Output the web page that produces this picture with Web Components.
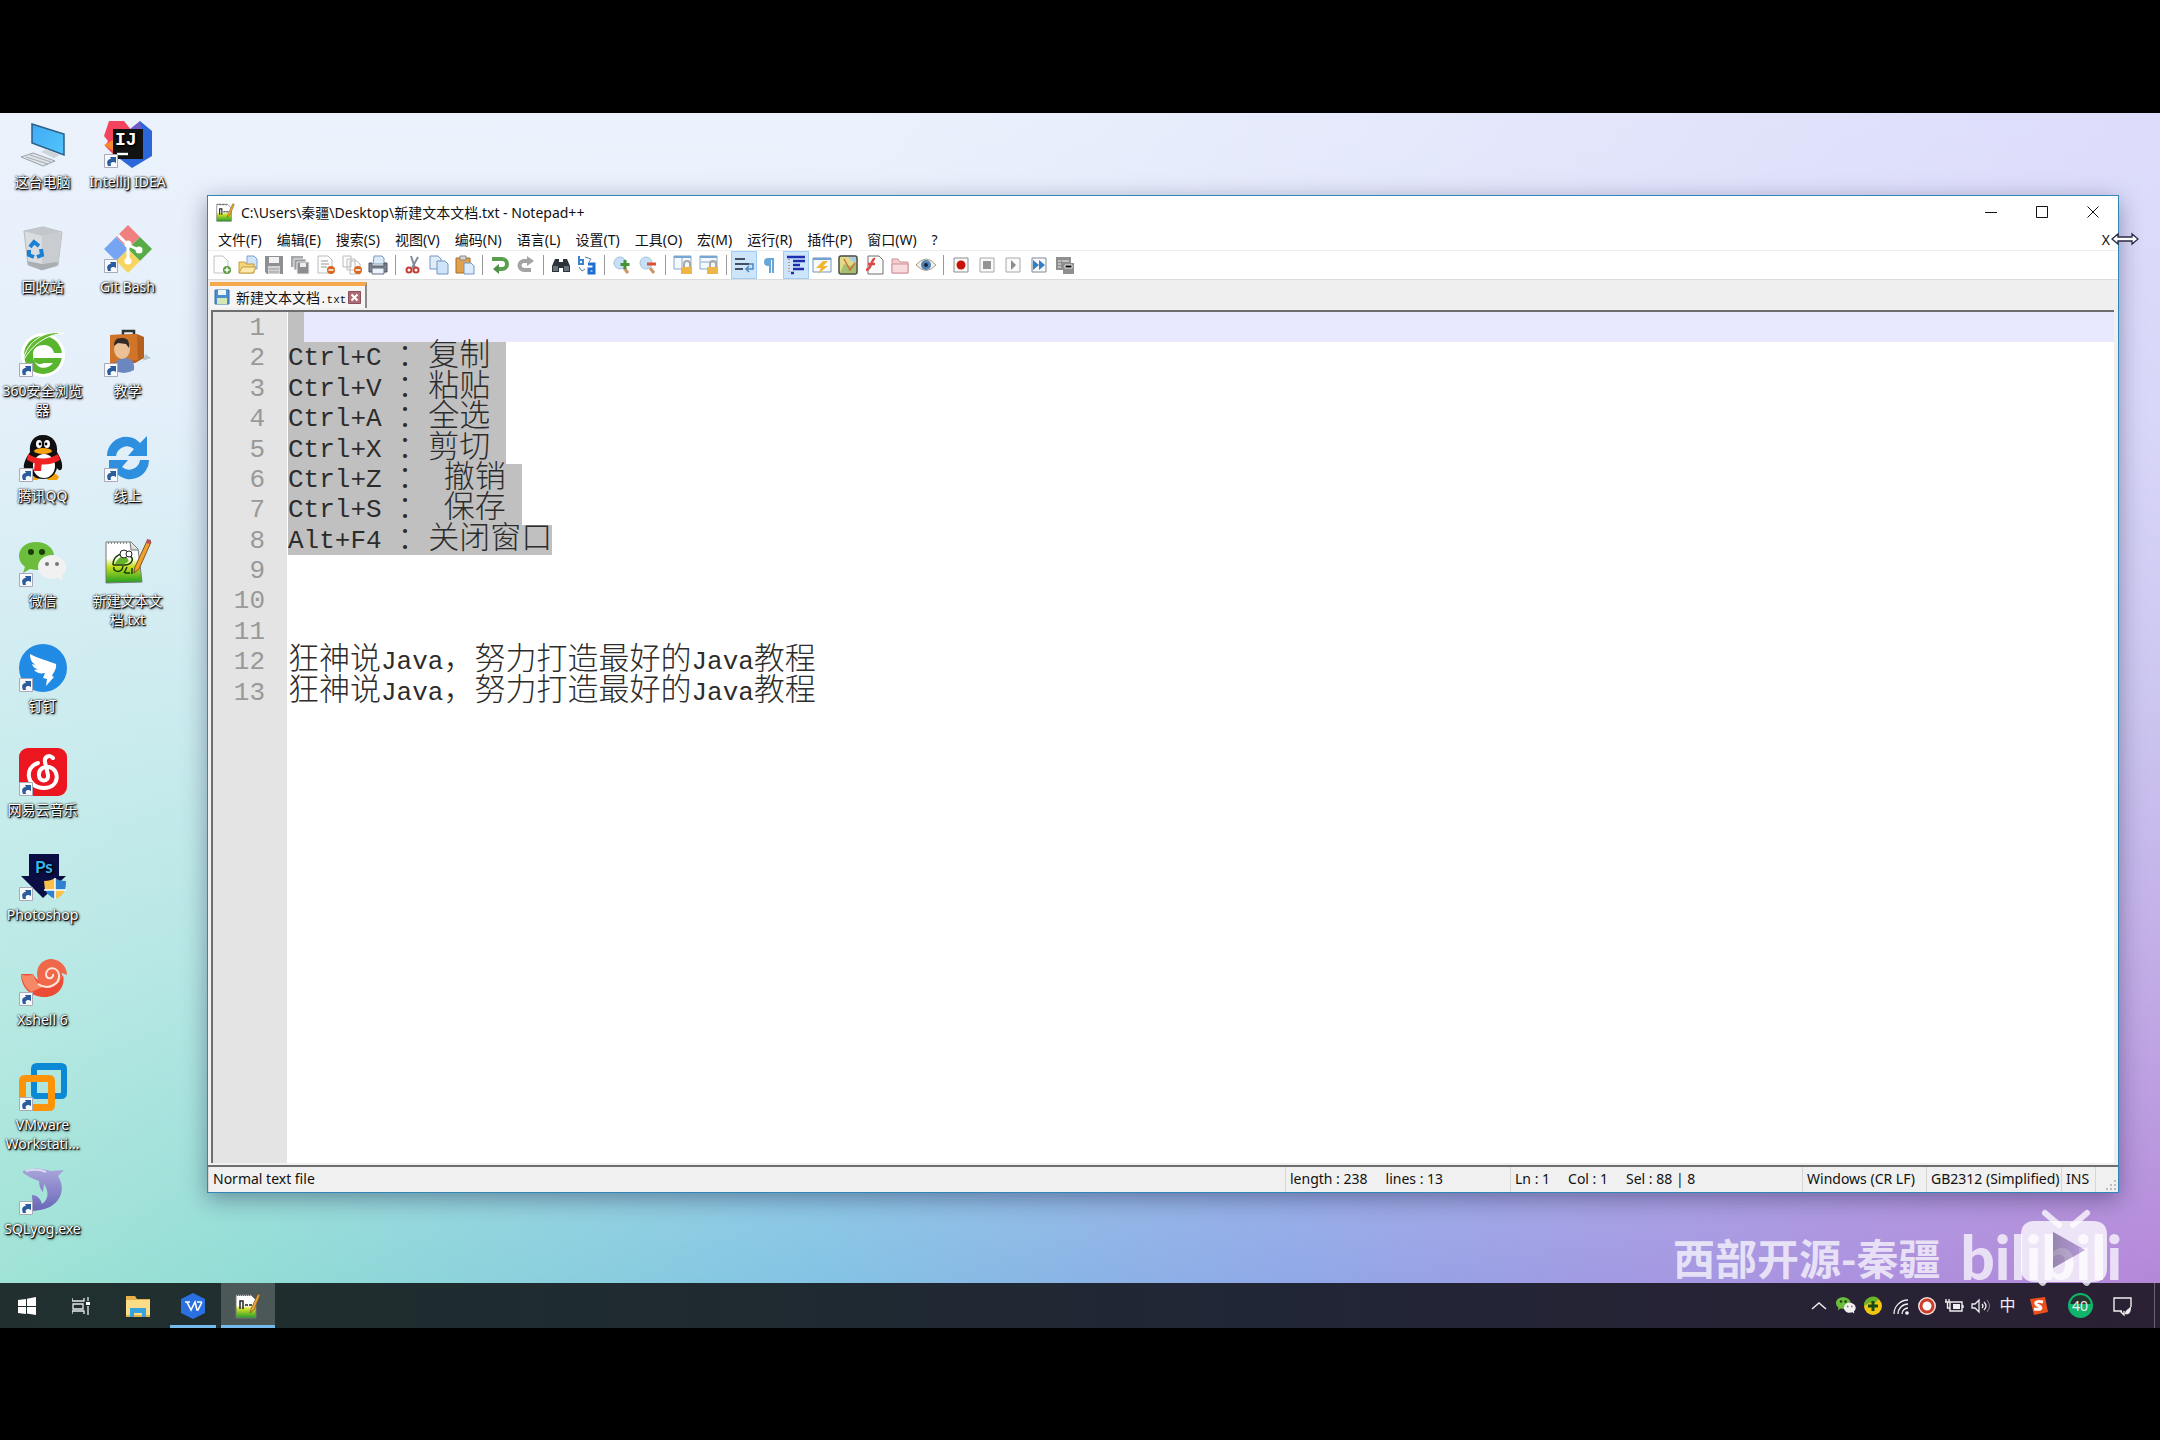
<!DOCTYPE html>
<html lang="zh-CN">
<head>
<meta charset="utf-8">
<title>Desktop</title>
<style>
  body {
    margin: 0;
    background: #000;
    color: #111;
    font: 14px/19px "Noto Sans", "Noto Sans CJK SC", sans-serif;
  }
</style>
</head>
<body>
<desktop-screen></desktop-screen>

<script>
const icons = {
  // desktop, 48 x 48
  computer: ['48', `<defs><linearGradient id="g" x2="1" y2="1"><stop stop-color="#3fa9f5"/><stop offset="1" stop-color="#54c6fb"/></linearGradient></defs>
    <path d="M13 4 45 14V35L13 23Z" fill="url(#g)" stroke="#2b5f86" stroke-width="1.5"/><path d="m27 29-5 3 13 6 6-3z" fill="#cdd5da"/><path d="M2 37 14 33l22 8-12 5z" fill="#dfe3e6" stroke="#9aa3aa"/><path d="m7 37 22 7M11 35l21 7" stroke="#a4adb3"/>`],
  recycle: ['48', `<path d="M5 6 24 2l19 5-4 33-16 5-14-5z" fill="#dadddf" stroke="#b4b9bd"/><path d="m5 6 18 5 20-4-19-5z" fill="#c2c7cb"/><path d="m23 11 20-4-4 33-16 5z" fill="#c9cdd1"/><path d="m8 36 15 3 16-2-1 4-15 4-13-5z" fill="#a9aeb1"/>
    <path d="m11 22 4-5 5 4M22 24l1 6-5 2M15 32l-5-2 0-5" fill="none" stroke="#1a80d5" stroke-width="4"/>`],
  se360: ['48', `<circle cx="24" cy="26" r="22" fill="#fff"/><circle cx="24" cy="26" r="19" fill="#59b52d"/><path d="M14 24c1-10 19-11 21 0zM14 29h31v-5H14c0 17 14 18 20 10H25c-6 3-10-1-11-5" fill="#fff"/><path d="M4 32C8 12 25 1 45 4 26 6 13 16 4 32" fill="#65ba32" stroke="#fff"/>`],
  qq: ['48', `<path d="M11 42q6-7 11 1l-4 3H8zM27 43q7-8 13 0l-2 3h-9z" fill="#f5a20c"/><path d="M24 1c-10 0-14 8-13 17-5 7-8 15-5 18 2 1 3-2 4-2 2 8 7 11 14 11s12-3 14-11c2 3 4 3 5 0 1-5-2-11-5-16 1-9-4-17-14-17" fill="#101010"/><ellipse cx="25" cy="32" rx="11" ry="12" fill="#fff"/><path d="M9 20q15 9 30 0l2 6q-16 9-33 0z" fill="#ef2323"/><path d="m16 25 7 2-1 10h-7z" fill="#ef2323"/><ellipse cx="20" cy="10" rx="3" ry="4" fill="#fff"/><ellipse cx="28" cy="10" rx="3" ry="4" fill="#fff"/><circle cx="21" cy="10" r="1.4"/><circle cx="27" cy="10" r="1.4"/><ellipse cx="24" cy="17" rx="9" ry="3" fill="#f5a20c"/>`],
  wechat: ['48', `<path d="M17 3C7 3 0 9 0 17c0 4 2 8 6 11l-2 6 7-4c16 4 24-4 24-13C35 9 27 3 17 3" fill="#6bbd3b"/><circle cx="12" cy="13" r="3" fill="#173e08"/><circle cx="23" cy="13" r="3" fill="#173e08"/><path d="M33 16c-8 0-14 5-14 12s6 12 14 12l6-1 5 3-1-5c10-9 1-21-10-21" fill="#f0f1f0"/><circle cx="28" cy="25" r="2" fill="#777"/><circle cx="38" cy="25" r="2" fill="#777"/>`],
  ding: ['48', `<circle cx="24" cy="24" r="24" fill="#218ae4"/><path d="M11 10c9 5 19 7 26 10 1 5-3 9-4 12l2 1-8 9 1-7-4-1 2-5c-5 1-8 0-11-3l5-1c-4 0-6-2-7-5l4 1c-4-2-6-5-6-11" fill="#fff"/>`],
  netease: ['48', `<rect width="48" height="48" rx="9" fill="#eb1620"/><path d="M34 10c-4-4-9-1-8 4l3 13c1 8-10 7-9-1 0-5 5-8 10-7 11 2 11 21-5 21-18 0-20-21-6-25" fill="none" stroke="#fff" stroke-width="4" stroke-linecap="round"/>`],
  photoshop: ['48', `<path d="M10 1h30v22h7L24 45 2 23h8z" fill="#0b0e45"/><text x="16" y="20" font-family="Lato" font-size="17" font-weight="700" fill="#36b6f2">Ps</text><path d="M25 28q7 0 11-3v12H26z" fill="#f8c149"/><path d="M36 25v12h10q1-4 1-9-7 0-11-3" fill="#2c82cf"/><path d="M36 37h10q-3 7-10 9z" fill="#f8c149"/><path d="M36 37v9q-7-3-10-9z" fill="#2c82cf"/><path d="M36 25v21M25 37h22" stroke="#fff" stroke-width="1.5"/>`],
  xshell: ['48', `<path d="M2 16h12c6 12 22 15 30 1 3 13-7 22-18 22C11 39 2 29 2 16" fill="#ec4b35"/><path d="M2 16q6 3 12 0 3 11 12 12L12 34Q4 28 2 16" fill="#f58866"/><path d="M20 25C14 8 24 1 33 1c9 1 15 8 15 16l-5-2c2 12-15 20-23 10" fill="#f0684a"/><path d="M19 26c10 7 22 0 21-9s-13-9-13 0c1 5 8 4 7-1" fill="none" stroke="#fbe5db" stroke-width="2"/>`],
  vmware: ['48', `<path d="M18 0h24q6 0 6 6v24q0 6-6 6H18q-6 0-6-6V6q0-6 6-6m0 7v23h24V7z" fill="#0b89d4" fill-rule="evenodd"/><path d="M6 12h24q6 0 6 6v24q0 6-6 6H6q-6 0-6-6V18q0-6 6-6m1 7v22h22V19z" fill="#fd9408" fill-rule="evenodd"/><path d="M12 19v11q0 6 6 6h11v-6H18V19z" fill="#0b89d4"/>`],
  dolphin: ['48', `<defs><linearGradient id="g" x2="0" y2="1"><stop stop-color="#a9a7dc"/><stop offset="1" stop-color="#6a66b8"/></linearGradient></defs><path d="M4 4Q18-1 32 4l13-1-6 6c10 16-1 32-18 34l-7 1-1-16c5 0 9 4 10 9 8-6 6-14 2-20l-1 8q-4-4-4-11Q11 11 4 6z" fill="url(#g)"/><path d="M7 4q12-3 20 1" stroke="#dad8f4" stroke-width="2" fill="none"/>`],
  idea: ['48', `<path d="m5 1 15 0 8 10-4 18-14 6-9-9 3-5-4-5z" fill="#f5425d"/><path d="m0 25 11-6 6 17z" fill="#f78a2c"/><path d="m36 1 12 10v25L28 48 16 39z" fill="#2b67d8"/><path d="m36 1-10 8 14 9z" fill="#6c5bc9"/><rect x="9" y="9" width="30" height="30" fill="#121212"/><path d="M13 34h11" stroke="#fff" stroke-width="2.4"/><text x="11" y="25" font-family="Liberation Mono" font-weight="700" font-size="18" fill="#fff">IJ</text>`],
  git: ['48', `<path d="M24 0 36 12 24 24 12 12z" fill="#f08080"/><path d="m36 12 12 12-12 12-12-12z" fill="#57ac48"/><path d="m24 24 12 12-12 12-12-12z" fill="#f8d561"/><path d="m12 12 12 12-12 12L0 24z" fill="#76a5f3"/><path d="m14 10 10 10v17m0-17 11 5" stroke="#fff" stroke-width="3" fill="none"/><circle cx="24" cy="19" r="3.5" fill="#fff"/><circle cx="35" cy="25" r="3.5" fill="#fff"/><circle cx="24" cy="36" r="3.5" fill="#fff"/>`],
  teach: ['48', `<path d="m24 37 23-8-6-4-2 7z" fill="#b9c6cf"/><path d="M19 6V2h11v4" fill="none" stroke="#333" stroke-width="2.5"/><path d="M6 6 33 5l7 3v21l-9 5H6z" fill="#b55f1e"/><path d="M6 6 33 5l1 26-28 3z" fill="#cf7428"/><path d="M9 41q2-12 12-12t9 12q-10 6-21 0" fill="#6c86c0"/><ellipse cx="18" cy="20" rx="8" ry="10" fill="#ecc198"/><path d="M10 17q0-9 8-8 8-1 7 10l-3-4-8-1z" fill="#342a26"/>`],
  sync: ['48', `<path d="M3 22A19 19 0 0 1 36 9l7-7v20H24l6-7a11 11 0 0 0-18 7z" fill="#2f8fdf"/><path d="M45 26A19 19 0 0 1 12 39l-7 6V26h19l-6 7a11 11 0 0 0 18-7z" fill="#2f8fdf"/>`],
  notepad: ['48', `<defs><linearGradient id="g" x2="0" y2="1"><stop offset=".4" stop-color="#fff"/><stop offset=".6" stop-color="#c6df1e"/><stop offset="1" stop-color="#1f9e22"/></linearGradient></defs><path d="M2 3h25l7 7 4 33-36 1z" fill="url(#g)" stroke="#777"/><path d="m26 3 1 8h7" fill="#ddd" stroke="#777"/><path d="M4 4h21" stroke="#888" stroke-dasharray="1 2" stroke-width="2"/><path d="M9 26c0-9 8-13 13-9h4c5 3 1 9-5 9H9m10 1c-1 8-11 6-9 1m10 6 3-6m-2 6h5m2-5v6" fill="none" stroke="#173d0a" stroke-width="1.5"/><path d="M11 25q5-10 11-7 6 4-2 7z" fill="#64b52b"/><circle cx="20" cy="15" r="4" fill="#fff" stroke="#222"/><circle cx="25" cy="15" r="3" fill="#fff" stroke="#222"/><path d="m30 34 1-6L43 2l4 1-12 27z" fill="#f0a32c" stroke="#83551d"/><path d="m42 4 1-4 4 1v4z" fill="#b4525b"/>`],
  notepadsmall: ['26', `<defs><linearGradient id="g" x2="0" y2="1"><stop offset=".45" stop-color="#fff"/><stop offset=".6" stop-color="#cde02c"/><stop offset="1" stop-color="#229c25"/></linearGradient></defs><path d="M1 2h15l5 5v18H1z" fill="url(#g)" stroke="#777"/><path d="M2 2h13" stroke="#666" stroke-width="2" stroke-dasharray="1 1"/><path d="M5 16V8h3v8M10 12h3m1 0h3" fill="none" stroke="#222" stroke-width="1.500"/><path d="m15 20 1-4L23 1l2 1-6 15z" fill="#eea334" stroke="#7a5420" stroke-width=".7"/>`],
  shortcut: ['14', `<path d="M.5.5h13v13H.5z" fill="#f8f9fb" stroke="#aab"/><path d="M4 12C2 7 4 5 7 5L6 3h6v6l-2-1C7 8 6 9 7 12z" fill="#2b5c9e"/>`],

  // toolbar, 20 x 20
  new: ['20', `<path d="M2 1h9l5 5v12H2z" fill="#fdfdfd" stroke="#bfc3c6"/><circle cx="15" cy="15" r="4" fill="#5b9b43"/><path d="M15 12.500v5M12.500 15h5" stroke="#fff" stroke-width="1.500"/>`],
  open: ['20', `<path d="M9 1h7l3 3v10H9z" fill="#cfe4f8" stroke="#7aa1cb"/><path d="M1 7h6l1 2h8v9H1z" fill="#f3d67c" stroke="#c59c3f"/><path d="m1 18 3-6h14l-3 6z" fill="#fbe9ad" stroke="#c59c3f"/>`],
  save: ['20', `<path d="M1 1h18v18H3l-2-2z" fill="#8d8f92"/><path d="M5 2h10v6H5z" fill="#f2f2f2"/><path d="M4 11h12v8H4z" fill="#d4d4d4"/><path d="M5 14h10M5 17h10" stroke="#999"/>`],
  saveall: ['20', `<path d="M1 1h12v11H1z" fill="#a7a9ac"/><path d="M4 4h12v11H4z" fill="#97999c" stroke="#eee"/><path d="M7 7h12v12H7z" fill="#8b8d90" stroke="#eee"/><path d="M10 8h6v4h-6z" fill="#eee"/>`],
  close: ['20', `<path d="M2 1h10l4 4v13H2z" fill="#fdfdfd" stroke="#b9bcbf"/><path d="M5 6h7M5 9h8M5 12h6" stroke="#999"/><circle cx="15" cy="15" r="4" fill="#d9651f"/><path d="M12.500 15h5" stroke="#fff" stroke-width="1.500"/>`],
  closeall: ['20', `<path d="M1 1h8v11H1zM5 4h8v11H5zM8 6h7l3 3v10H8z" fill="#fdfdfd" stroke="#b9bcbf"/><circle cx="16" cy="15" r="4" fill="#d9651f"/><path d="M13.500 15h5" stroke="#fff" stroke-width="1.500"/>`],
  print: ['20', `<path d="M6 1h8l2 2v6H5z" fill="#dcebf9" stroke="#7a97b8"/><path d="M1 8h3v3h12V8h3v9H1z" fill="#7d8590" stroke="#4c535d"/><path d="M4 13h12v6H4z" fill="#eaf2fa" stroke="#647081"/>`],
  cut: ['20', `<path d="m8 1 4 12M15 2l-6 11" stroke="#7e8c9b" stroke-width="2"/><circle cx="6" cy="15" r="2.500" fill="none" stroke="#c53d32" stroke-width="2"/><circle cx="13" cy="15" r="2.500" fill="none" stroke="#c53d32" stroke-width="2"/>`],
  copy: ['20', `<path d="M1 1h8l3 3v10H1z" fill="#e0edf9" stroke="#7097c1"/><path d="M8 6h8l3 3v10H8z" fill="#cfe4f8" stroke="#7097c1"/>`],
  paste: ['20', `<path d="M1 3h14v15H1z" fill="#e2a04a" stroke="#a66f26"/><path d="M5 1h6v4H5z" fill="#d6d6d6" stroke="#888"/><path d="M9 8h7l3 3v8H9z" fill="#dcebf9" stroke="#7097c1"/>`],
  undo: ['20', `<path d="M2 4h10a5 5 0 0 1 0 10H8" fill="none" stroke="#5a9e4e" stroke-width="4"/><path d="m9 9v10l-6-5z" fill="#4c9143"/>`],
  redo: ['20', `<path d="M12 6H8a4 4 0 0 0 0 9h7" fill="none" stroke="#a4a4a4" stroke-width="4"/><path d="M11 1v10l7-5z" fill="#a4a4a4"/>`],
  find: ['20', `<path d="M4 4h4v3h4V4h4l3 7v6h-7v-4H8v4H1v-6z" fill="#2c3238"/><path d="M2 11h5v5H2zM13 11h5v5h-5z" fill="#66727d"/>`],
  replace: ['20', `<path d="M2 1v8h4V5H2" fill="none" stroke="#3b83d0" stroke-width="2"/><path d="M11 9h6v9h-5v-4h5" fill="none" stroke="#1f6fd0" stroke-width="3"/><path d="m8 2 6 2-2 3M2 12l3 4 3-2" fill="none" stroke="#5e7fa5"/>`],
  zoomin: ['20', `<circle cx="8" cy="8" r="6" fill="#c6e0f6" stroke="#a4c1db"/><path d="m12 13 4 5" stroke="#ca9560" stroke-width="3"/><path d="M13 5v9M8.500 9.500h9" stroke="#459339" stroke-width="3"/>`],
  zoomout: ['20', `<circle cx="8" cy="8" r="6" fill="#c6e0f6" stroke="#a4c1db"/><path d="m12 13 4 5" stroke="#ca9560" stroke-width="3"/><path d="M9 9h9" stroke="#de5135" stroke-width="3"/>`],
  syncv: ['20', `<path d="M1 1h17v13H1zM9 2v12" fill="#f4f9fd" stroke="#86a9cb"/><path d="M1 2h17" stroke="#78a5d4" stroke-width="2"/><path d="M11 12V9a3 3 0 0 1 6 0v3" fill="none" stroke="#a7a9a8" stroke-width="2"/><path d="M8 12h11v7H8z" fill="#eeb646"/>`],
  synch: ['20', `<path d="M1 1h17v13H1zM2 7h16" fill="#f4f9fd" stroke="#86a9cb"/><path d="M1 2h17" stroke="#78a5d4" stroke-width="2"/><path d="M11 12V9a3 3 0 0 1 6 0v3" fill="none" stroke="#a7a9a8" stroke-width="2"/><path d="M8 12h11v7H8z" fill="#eeb646"/>`],
  wrap: ['20', `<path d="M1 4h10M1 9h14M1 14h8" stroke="#45505e" stroke-width="2"/><path d="M15 9h4v5h-6m2-3-3 3 3 3" fill="none" stroke="#4b88c1" stroke-width="1.500"/>`],
  pilcrow: ['20', `<path d="M14 3H8a4 4 0 0 0 0 8h1v7h2V5h1v13h2z" fill="#69a7d8"/>`],
  indent: ['20', `<path d="M1 2h18M7 6h12M7 10h7M7 14h11M5 18h3" stroke="#1d2db0" stroke-width="2.500"/><path d="M3 4v15" stroke="#d33" stroke-dasharray="1 2"/>`],
  lang: ['20', `<path d="M1 3h18v14H1z" fill="#f6fafd" stroke="#7897b7"/><path d="M1 4h18" stroke="#6fa1d5" stroke-width="2"/><path d="m11 6-7 7h5l-3 6 10-8h-5l5-5z" fill="#f0b52f"/>`],
  map: ['20', `<rect x="1" y="1" width="18" height="18" rx="2" fill="#e3d98b" stroke="#464e43" stroke-width="1.500"/><path d="M10 2h8v8z" fill="#a9cde9"/><path d="m2 18 4-9 6 2 6-3v10z" fill="#a5c070"/><path d="m6 4 6 11 5-7" fill="none" stroke="#cd7434" stroke-width="1.500"/>`],
  func: ['20', `<path d="M4 1h11l4 4v14H4z" fill="#fbfbfb" stroke="#74716e"/><path d="M11 4C7 3 8 15 2 15M4 9h7" fill="none" stroke="#d84a4a" stroke-width="2.500"/>`],
  folder: ['20', `<path d="M2 4h6l2 3h8v11H2z" fill="#f4cccf" stroke="#cf9297"/><path d="M2 9h16v9H2z" fill="#f8dcdd" stroke="#cf9297"/>`],
  eye: ['20', `<path d="M0 10q10-12 20 0-10 11-20 0" fill="#f2efe8" stroke="#a89f91"/><circle cx="10" cy="10" r="5" fill="#5283b3"/><circle cx="10" cy="10" r="2" fill="#17263a"/>`],
  rec: ['20', `<path d="M3 3h14v14H3z" fill="#fafafa" stroke="#8c8c8c"/><circle cx="10" cy="10" r="4.500" fill="#c91308"/>`],
  stop: ['20', `<path d="M3 3h14v14H3z" fill="#fafafa" stroke="#a8a8a8"/><path d="M6 6h8v8H6z" fill="#949494"/>`],
  play: ['20', `<path d="M3 3h14v14H3z" fill="#fafafa" stroke="#a8a8a8"/><path d="m8 5 5 5-5 5z" fill="#8b8b8b"/>`],
  multi: ['20', `<path d="M3 3h14v14H3z" fill="#fafafa" stroke="#7b8b9b"/><path d="m4 5 6 5-6 5zM10 5l6 5-6 5z" fill="#347fc2"/>`],
  savemacro: ['20', `<path d="M1 2h15v13H1z" fill="#8f8f8f"/><path d="M8 8h11v11H8z" fill="#8f8f8f"/><path d="M3 6h3m1 0h7M3 9h3M3 12h3m4-2h7v3h-7z" stroke="#eee"/>`],
  file: ['16', `<path d="M1 1h14v14H1z" fill="#4a8fcf" stroke="#396f9f"/><path d="M4 1h8v5H4z" fill="#eef5fb"/><path d="M3 9h10v6H3z" fill="#d4e7b4"/>`],
  tabclose: ['13', `<path d="M.5.5h12v12H.5z" fill="#b06c76" stroke="#88505a"/><path d="m3.500 3.500 6 6m0-6-6 6" stroke="#fff" stroke-width="2"/>`],

  // window buttons, 12 x 12
  min: ['12', `<path d="M0 6.500h12" stroke="#111"/>`],
  max: ['12', `<path d="M.5.5h11v11H.5z" fill="none" stroke="#111"/>`],
  exit: ['12', `<path d="m.5.5 11 11m0-11-11 11" stroke="#111"/>`],
  grip: ['10', `<path d="M8 0h2v2H8zM8 4h2v2H8zM8 8h2v2H8zM4 4h2v2H4zM4 8h2v2H4zM0 8h2v2H0z" fill="#bdbdbd"/>`],
  resize: ['28', `<path d="m1 14 6-5v3h14V9l6 5-6 5v-3H7v3z" fill="#fff" stroke="#2b2b45" stroke-width="1.300"/>`],

  // taskbar
  start: ['18', `<path d="m0 3 8-1v7H0zM9 1.800 18 0v9H9zM0 10h8v7l-8-1zM9 10h9v8l-9-1.500z" fill="#fff"/>`],
  taskview: ['18', `<path d="M0 1v3h12V1M0 17v-3h12v3M1 7h10v5H1zM16 0v4M16 9v9" fill="none" stroke="#e8eceb" stroke-width="1.300"/><path d="M14 5h4v3h-4z" fill="#fff"/>`],
  explorer: ['26', `<path d="M1 3h9l2 3h13v18H1z" fill="#e5b24c"/><path d="M1 7h24v15H1z" fill="#fbdc87"/><path d="M5 24v-9h16v9h-4v-4H9v4z" fill="#37a4e0"/>`],
  wps: ['26', `<path d="m13 0 12 6v14l-12 6-12-6V6z" fill="#2a70e0"/><path d="M5 9h5m7 0h5M7 9l4 8 4-8 2 8h1l4-8m-11 8 3-6" fill="none" stroke="#fff" stroke-width="1.600"/>`],
  up: ['20', `<path d="m3 13 7-6 7 6" fill="none" stroke="#eee" stroke-width="1.500"/>`],
  ball: ['20', `<circle cx="10" cy="10" r="9" fill="#f2c60f"/><path d="M1 10a9 9 0 0 1 15-7l-4 4H6z" fill="#68b52c"/><path d="M10 5v10M5 10h10" stroke="#17491a" stroke-width="3"/>`],
  wifi: ['20', `<path d="M4 18A14 14 0 0 1 18 4M8 18A10 10 0 0 1 18 8M12 18a6 6 0 0 1 6-6" fill="none" stroke="#eee" stroke-width="1.300"/><circle cx="17" cy="17" r="1.800" fill="#fff"/>`],
  record: ['20', `<circle cx="10" cy="10" r="9" fill="#f4ded9"/><circle cx="10" cy="10" r="6" fill="#fff" stroke="#cf3b28" stroke-width="3"/>`],
  battery: ['20', `<path d="M6 6h12v9H6zM19 9v3M1 6h5M2 3v3m3-3v3M3.500 6v6H6" fill="none" stroke="#eee" stroke-width="1.400"/><path d="M9 8h7v5H9z" fill="#eee"/>`],
  sound: ['20', `<path d="M1 8h3l4-4v12l-4-4H1z" fill="none" stroke="#eee" stroke-width="1.300"/><path d="M11 8q2 2 0 4M13 6q4 4 0 8" fill="none" stroke="#eee" stroke-width="1.300"/><path d="M16 4q5 6 0 12" fill="none" stroke="#8b8494"/>`],
  sogou: ['20', `<path d="m1 3 15-2 3 15-14 3z" fill="#ed4e1a"/><path d="M14 6C6 4 5 8 9 9.500s5 5-4 3.500" fill="none" stroke="#fff" stroke-width="3"/>`],
  notice: ['20', `<path d="M10 15H2V2h17v9M8 15l4 4v-4" fill="none" stroke="#eee" stroke-width="1.400"/><path d="M18 11c-1 2-5 3-5 7 4 1 6-1 6-7" fill="#eee"/>`],
  tv: ['96', `<defs><linearGradient id="g"><stop stop-color="#8d83a0"/><stop offset="1" stop-color="#b79bdb"/></linearGradient></defs><g fill="#fff" fill-opacity=".76"><path d="m25 10 14 12M67 10 53 22" stroke="#fff" stroke-opacity=".76" stroke-width="6" stroke-linecap="round"/><path fill-rule="evenodd" d="M15 18h58q14 0 14 14v33q0 14-14 14H15Q1 79 1 65V32q0-14 14-14m18 11v36l32-18z"/><path d="M18 79h9q-4 8-9 0M62 79h9q-4 8-9 0"/></g><path d="M33 29v36l32-18z" fill="url(#g)" fill-opacity=".75"/>`]
}

customElements.define('vector-icon',
  class extends HTMLElement {
    connectedCallback () {
      const [box, body] = icons[this.getAttribute('name')]
      const size = this.getAttribute('size') || box
      this.attachShadow({ mode: 'open' }).innerHTML = `
        <style>
          :host { display: inline-flex; flex: none; }
          svg { display: block; }
        </style>
        <svg width="${size}" height="${size}" viewBox="0 0 ${box} ${box}" aria-hidden="true">${body}</svg>
      `
    }
  })

customElements.define('desktop-icon',
  class extends HTMLElement {
    connectedCallback () {
      const link = this.hasAttribute('plain') ? '' : '<vector-icon class="link" name="shortcut"></vector-icon>'
      this.attachShadow({ mode: 'open' }).innerHTML = `
        <style>
          :host { display: block; }
          a {
            display: flex;
            flex-direction: column;
            align-items: center;
            gap: 4px;
            color: #fff;
            text-align: center;
            text-decoration: none;
            text-shadow: 0 0 2px #000, 1px 1px 1px #000, 1px 1px 3px #000;
          }
          .picture { position: relative; display: flex; }
          .link { position: absolute; left: 0; bottom: 0; }
          .name { width: 82px; white-space: pre-line; }
        </style>
        <a href="#"><span class="picture"><vector-icon name="${this.getAttribute('icon')}"></vector-icon>${link}</span><span class="name"><slot></slot></span></a>
      `
    }
  })

customElements.define('menu-bar',
  class extends HTMLElement {
    connectedCallback () {
      const items = ['文件(F)', '编辑(E)', '搜索(S)', '视图(V)', '编码(N)', '语言(L)', '设置(T)', '工具(O)', '宏(M)', '运行(R)', '插件(P)', '窗口(W)', '?']
      this.attachShadow({ mode: 'open' }).innerHTML = `
        <style>
          :host {
            display: flex;
            align-items: center;
            height: 22px;
            padding: 0 8px 0 10px;
            border-bottom: 1px solid #ededed;
          }
          nav { display: flex; gap: 15px; flex: 1; }
          button { all: unset; white-space: nowrap; }
        </style>
        <nav>${items.map(item => `<button type="button">${item}</button>`).join('')}</nav>
        <button type="button" aria-label="Close document">X</button>
      `
    }
  })

customElements.define('tool-bar',
  class extends HTMLElement {
    connectedCallback () {
      const groups = [
        'new open save saveall close closeall print',
        'cut copy paste',
        'undo redo',
        'find replace',
        'zoomin zoomout',
        'syncv synch',
        'wrap pilcrow indent lang map func folder eye',
        'rec stop play multi savemacro'
      ]
      const pressed = ['wrap', 'indent']
      this.attachShadow({ mode: 'open' }).innerHTML = `
        <style>
          :host {
            display: flex;
            height: 28px;
            padding-left: 1px;
            border-bottom: 1px solid #dcdcdc;
          }
          div { display: flex; }
          div + div::before {
            content: '';
            width: 1px;
            margin: 4px;
            background: #999;
          }
          button {
            all: unset;
            box-sizing: border-box;
            width: 26px;
            display: flex;
            align-items: center;
            justify-content: center;
          }
          button[aria-pressed] {
            background: #cce5fb;
            border: 1px solid #9fcdf3;
          }
        </style>
        ${groups.map(group => `<div>${group.split(' ').map(name => `<button type="button" aria-label="${name}"${pressed.includes(name) ? ' aria-pressed="true"' : ''}><vector-icon name="${name}"></vector-icon></button>`).join('')}</div>`).join('')}
      `
    }
  })

customElements.define('text-editor',
  class extends HTMLElement {
    #lines = [
      '', 'Ctrl+C ：复制', 'Ctrl+V ：粘贴', 'Ctrl+A ：全选', 'Ctrl+X ：剪切',
      'Ctrl+Z ： 撤销', 'Ctrl+S ： 保存', 'Alt+F4 ：关闭窗口', '', '', '',
      '狂神说Java，努力打造最好的Java教程', '狂神说Java，努力打造最好的Java教程'
    ]

    connectedCallback () {
      this.attachShadow({ mode: 'open' }).innerHTML = `
        <style>
          :host {
            display: flex;
            margin: 0 4px 2px 3px;
            border: solid #6e6e6e;
            border-width: 2px 0 0 2px;
            background: #fff;
            font: 26px/32px "Liberation Mono", "Noto Sans CJK SC", monospace;
          }
          .numbers, .code {
            display: grid;
            grid-template-rows: repeat(13, minmax(0, 1fr));
            height: 395px;
          }
          .gutter {
            width: 74px;
            background: #e4e4e4;
            color: #999;
            text-align: right;
          }
          .numbers { padding-right: 22px; }
          .code {
            flex: 1;
            padding-left: 1px;
            outline: 0;
            color: #2c2c2c;
          }
          .line { display: flex; white-space: pre; }
          .line.current { background: #e8e8ff; }
          .sel { background: #c0c0c0; }
          .sel.eol { padding-right: 16px; }
          .cjk { font-size: 31px; font-weight: 300; line-height: 0; }
        </style>
        <div class="gutter"><div class="numbers">${this.#lines.map((line, i) => `<span>${i + 1}</span>`).join('')}</div></div>
        <div class="code" role="textbox" aria-multiline="true" aria-label="Document" contenteditable="true" spellcheck="false">${this.#lines.map((line, i) => this.#row(line, i)).join('')}</div>
      `
    }

    #row (line, i) {
      const text = line.replace(/[^\x00-\x7f]+/g, run => `<span class="cjk">${run}</span>`)
      const selected = i < 7 ? ' class="sel eol"' : i === 7 ? ' class="sel"' : ''
      return `<div class="line${i === 0 ? ' current' : ''}"><span${selected}>${text}</span></div>`
    }
  })

customElements.define('status-bar',
  class extends HTMLElement {
    connectedCallback () {
      this.attachShadow({ mode: 'open' }).innerHTML = `
        <style>
          :host {
            display: grid;
            grid-template-columns: 1fr 225px 292px 124px 135px 34px 23px;
            height: 25px;
            line-height: 24px;
            border-top: 2px solid #6e6e6e;
            background: #f0f0f0;
            white-space: nowrap;
          }
          div {
            display: flex;
            gap: 18px;
            padding-left: 4px;
            border-left: 1px solid #d7d7d7;
          }
          div:first-child { padding-left: 1px; border: 0; }
          div:last-child {
            padding: 2px;
            align-items: flex-end;
            justify-content: flex-end;
          }
        </style>
        <div>Normal text file</div>
        <div><span>length : 238</span><span>lines : 13</span></div>
        <div><span>Ln : 1</span><span>Col : 1</span><span>Sel : 88 | 8</span></div>
        <div>Windows (CR LF)</div>
        <div>GB2312 (Simplified)</div>
        <div>INS</div>
        <div><vector-icon name="grip"></vector-icon></div>
      `
    }
  })

customElements.define('app-window',
  class extends HTMLElement {
    connectedCallback () {
      this.attachShadow({ mode: 'open' }).innerHTML = `
        <style>
          :host {
            display: flex;
            flex-direction: column;
            background: #fff;
            border: 1px solid #2f86b8;
            box-shadow: 0 6px 22px rgba(20, 20, 60, .4);
          }
          header {
            display: flex;
            align-items: center;
            height: 32px;
            padding-left: 8px;
          }
          h1 { flex: 1; margin: 0 0 0 6px; font: inherit; }
          button { all: unset; display: flex; align-items: center; justify-content: center; }
          header button { width: 51px; height: 32px; }
          .tabs {
            display: flex;
            align-items: flex-end;
            height: 27px;
            padding: 1px 2px 2px;
            background: #efefef;
          }
          .tab {
            display: flex;
            align-items: center;
            height: 22px;
            padding: 0 4px;
            border-top: 4px solid #f5a94c;
            border-right: 2px solid #8a8a8a;
            background: #f5f5f5;
          }
          .tab span { margin: 0 2px 0 6px; font-family: "Noto Sans CJK SC", sans-serif; }
          .tab small { font: 11px "Liberation Mono", monospace; }
          .body { display: flex; flex-direction: column; flex: 1; background: #f0f0f0; }
          text-editor { flex: 1; }
        </style>
        <header>
          <vector-icon name="notepadsmall" size="19"></vector-icon>
          <h1><slot></slot></h1>
          <button type="button" aria-label="Minimize"><vector-icon name="min"></vector-icon></button>
          <button type="button" aria-label="Maximize"><vector-icon name="max"></vector-icon></button>
          <button type="button" aria-label="Close"><vector-icon name="exit"></vector-icon></button>
        </header>
        <menu-bar></menu-bar>
        <tool-bar></tool-bar>
        <div class="tabs">
          <div class="tab">
            <vector-icon name="file"></vector-icon>
            <span>新建文本文档<small>.txt</small></span>
            <button type="button" aria-label="Close tab"><vector-icon name="tabclose"></vector-icon></button>
          </div>
        </div>
        <div class="body">
          <text-editor></text-editor>
          <status-bar></status-bar>
        </div>
      `
    }
  })

customElements.define('task-bar',
  class extends HTMLElement {
    connectedCallback () {
      const tray = ['up', 'wechat', 'ball', 'wifi', 'record', 'battery', 'sound']
      this.attachShadow({ mode: 'open' }).innerHTML = `
        <style>
          :host {
            display: flex;
            height: 45px;
            background: linear-gradient(90deg, #21302f, #1f2b30 30%, #212636 60%, #2b2034);
            color: #eee;
          }
          button {
            all: unset;
            box-sizing: border-box;
            display: flex;
            align-items: center;
            justify-content: center;
          }
          .apps, .tray { display: flex; }
          .apps { flex: 1; }
          .apps button { width: 54px; }
          .apps .explorer { margin-left: 3px; }
          .apps .open { border-bottom: 3px solid #76b9ed; padding-top: 3px; }
          .apps .wps { width: 46px; margin: 0 5px; }
          .apps .active { background: #4b5857; }
          .tray button { width: 27px; }
          .tray .ime { font-size: 16px; }
          .tray .sogou { width: 36px; }
          .tray .score { width: 46px; }
          .score span {
            width: 25px;
            height: 25px;
            box-sizing: border-box;
            border: 2px solid #10b56c;
            border-radius: 50%;
            background: linear-gradient(#24352f 45%, #10b56c 45%);
            font-size: 14px;
            line-height: 21px;
            text-align: center;
          }
          .tray .notice { width: 38px; }
          .tray .peek { width: 6px; margin-left: 13px; border-left: 1px solid #6c6574; }
        </style>
        <div class="apps">
          <button type="button" aria-label="Start"><vector-icon name="start"></vector-icon></button>
          <button type="button" aria-label="Task view"><vector-icon name="taskview"></vector-icon></button>
          <button type="button" class="explorer" aria-label="Explorer"><vector-icon name="explorer"></vector-icon></button>
          <button type="button" class="open wps" aria-label="WPS"><vector-icon name="wps"></vector-icon></button>
          <button type="button" class="open active" aria-label="Notepad++"><vector-icon name="notepadsmall"></vector-icon></button>
        </div>
        <div class="tray">
          ${tray.map(name => `<button type="button" aria-label="${name}"><vector-icon name="${name}" size="20"></vector-icon></button>`).join('')}
          <button type="button" class="ime">中</button>
          <button type="button" class="sogou" aria-label="Sogou"><vector-icon name="sogou"></vector-icon></button>
          <button type="button" class="score"><span>40</span></button>
          <button type="button" class="notice" aria-label="Notifications"><vector-icon name="notice"></vector-icon></button>
          <button type="button" class="peek" aria-label="Show desktop"></button>
        </div>
      `
    }
  })

customElements.define('video-watermark',
  class extends HTMLElement {
    connectedCallback () {
      this.attachShadow({ mode: 'open' }).innerHTML = `
        <style>
          :host {
            display: flex;
            align-items: flex-end;
            gap: 20px;
            color: rgba(255, 255, 255, .72);
            font: 700 42px/64px "Noto Sans CJK SC", sans-serif;
            pointer-events: none;
          }
          .logo {
            position: relative;
            font: 900 60px/64px Lato, sans-serif;
          }
          vector-icon { position: absolute; right: 6px; top: -22px; }
        </style>
        <span>西部开源-秦疆</span>
        <span class="logo">bilibili<vector-icon name="tv"></vector-icon></span>
      `
    }
  })

customElements.define('desktop-screen',
  class extends HTMLElement {
    connectedCallback () {
      this.attachShadow({ mode: 'open' }).innerHTML = `
        <style>
          :host {
            display: flex;
            flex-direction: column;
            box-sizing: border-box;
            height: 100vh;
            padding: 113px 0 112px;
          }
          main {
            position: relative;
            flex: 1;
            min-height: 0;
            background:
              linear-gradient(90deg, rgba(190, 175, 248, 0) 40%, rgba(190, 175, 248, .32) 100%),
              linear-gradient(180deg, #ebf2fc 0%, rgba(232, 240, 252, .95) 25%, rgba(222, 240, 248, .75) 50%, rgba(222, 242, 248, .45) 72%, rgba(225, 240, 248, 0) 100%),
              linear-gradient(90deg, #a0e3d5 0%, #92dcd6 12%, #84c3e4 38%, #8ba7e5 60%, #a18fdb 80%, #b075ca 100%);
          }
          .icons {
            display: grid;
            grid-template-rows: repeat(11, 1fr);
            grid-template-columns: repeat(2, 85px);
            grid-auto-flow: column;
            box-sizing: border-box;
            height: 100%;
            padding: 7px 0 11px;
          }
          app-window { position: absolute; inset: 82px 41px 90px 207px; }
          .pointer { position: absolute; right: 21px; top: 112px; }
          video-watermark { position: absolute; right: 38px; bottom: -6px; z-index: 1; }
        </style>
        <main>
          <div class="icons">
            <desktop-icon icon="computer" plain>这台电脑</desktop-icon>
            <desktop-icon icon="recycle" plain>回收站</desktop-icon>
            <desktop-icon icon="se360">360安全浏览器</desktop-icon>
            <desktop-icon icon="qq">腾讯QQ</desktop-icon>
            <desktop-icon icon="wechat">微信</desktop-icon>
            <desktop-icon icon="ding">钉钉</desktop-icon>
            <desktop-icon icon="netease">网易云音乐</desktop-icon>
            <desktop-icon icon="photoshop">Photoshop</desktop-icon>
            <desktop-icon icon="xshell">Xshell 6</desktop-icon>
            <desktop-icon icon="vmware">VMware Workstati...</desktop-icon>
            <desktop-icon icon="dolphin">SQLyog.exe</desktop-icon>
            <desktop-icon icon="idea">IntelliJ IDEA</desktop-icon>
            <desktop-icon icon="git">Git Bash</desktop-icon>
            <desktop-icon icon="teach">教学</desktop-icon>
            <desktop-icon icon="sync">线上</desktop-icon>
            <desktop-icon icon="notepad" plain>新建文本文<br>档.txt</desktop-icon>
          </div>
          <app-window>C:\\Users\\秦疆\\Desktop\\新建文本文档.txt - Notepad++</app-window>
          <vector-icon class="pointer" name="resize"></vector-icon>
          <video-watermark></video-watermark>
        </main>
        <task-bar></task-bar>
      `
    }
  })
</script>
</body>
</html>
